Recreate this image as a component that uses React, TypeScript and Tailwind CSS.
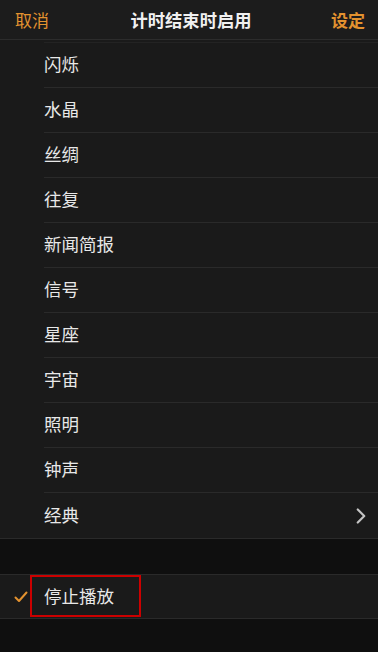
import { ChevronRight } from "lucide-react";

const sounds = ["闪烁", "水晶", "丝绸", "往复", "新闻简报", "信号", "星座", "宇宙", "照明", "钟声"];

const font = { fontFamily: '"Noto Sans CJK SC", "Liberation Sans", sans-serif' };

export default function App() {
  return (
    <div className="w-[378px] h-[652px] bg-[#0f0f0f] text-[#e8e8e8] overflow-hidden" style={font}>
      {/* header */}
      <div className="h-[40px] bg-[#1c1c1c] border-b border-[#2c2c2c] flex items-center justify-between pl-[15px] pr-[13px]">
        <span className="text-[17px] text-[#e3922f]">取消</span>
        <span className="text-[17.3px] font-bold text-[#f0f0f0] pl-[2px]">计时结束时启用</span>
        <span className="text-[17px] font-bold text-[#e3922f]">设定</span>
      </div>

      {/* sound list */}
      <div className="bg-[#1a1a1a] border-b border-[#2a2a2a] pt-[2px]">
        <div className="ml-[44px] border-t border-[#232323]" />
        {sounds.map((s) => (
          <div key={s} className="h-[45px] pl-[44px]">
            <div className="h-full flex items-center border-b border-[#2a2a2a] text-[17.5px] pb-[1px]">{s}</div>
          </div>
        ))}
        <div className="h-[45px] pl-[44px] pr-[4px] flex items-center justify-between text-[17.5px]">
          <span>经典</span>
          <ChevronRight className="w-[26px] h-[26px] text-[#c4c4c4]" strokeWidth={2} />
        </div>
      </div>

      {/* gap */}
      <div className="h-[35px]" />

      {/* stop playing */}
      <div className="h-[45px] bg-[#1a1a1a] border-y border-[#2a2a2a] flex items-center">
        <div className="w-[30px] pl-[14px] flex">
          <svg width="14" height="12" viewBox="0 0 14 12" fill="none">
            <path d="M1.5 6.5 L5 10 L12.5 1.5" stroke="#e3922f" strokeWidth="2" strokeLinecap="round" strokeLinejoin="round" />
          </svg>
        </div>
        <div className="h-[42px] w-[111px] border-2 border-[#cc0000] flex items-center pl-[12px] text-[17.5px] self-start">
          停止播放
        </div>
      </div>
    </div>
  );
}
